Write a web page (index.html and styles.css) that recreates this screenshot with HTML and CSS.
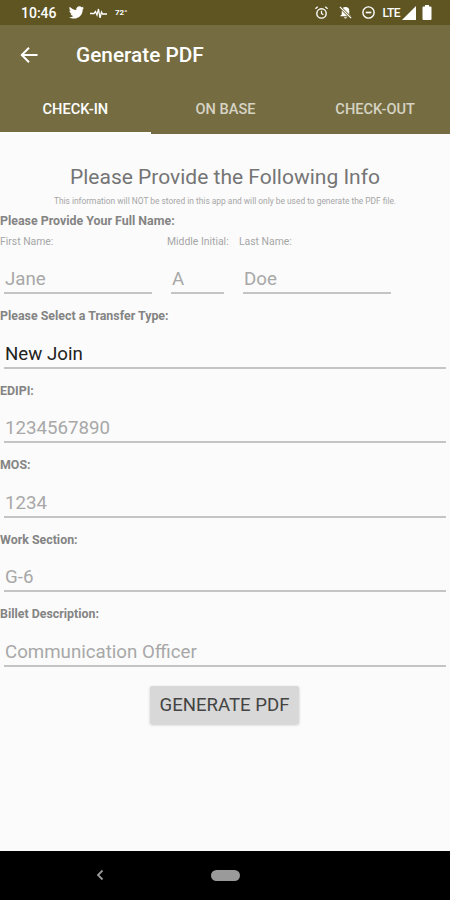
FILE: index.html
```html
<!DOCTYPE html>
<html lang="en">
<head>
    <meta charset="UTF-8">
    <meta name="viewport" content="width=device-width, initial-scale=1.0">
    <title>Generate PDF</title>
<link rel="stylesheet" href="styles.css">
</head>

<body>
<div class="status">
    <span class="time">10:46</span>
    <svg class="ic-bird" width="17" height="15" viewBox="0 0 24 22"><path fill="#fff" d="M23 3.900c-.8.400-1.700.600-2.600.700.900-.6 1.600-1.400 2-2.500-.9.500-1.800.900-2.900 1.100C18.700 2.300 17.500 1.800 16.200 1.800c-2.500 0-4.600 2-4.600 4.600 0 .400 0 .700.100 1C7.900 7.200 4.500 5.400 2.200 2.600c-.4.700-.6 1.500-.6 2.300 0 1.600.800 3 2 3.800-.7 0-1.400-.2-2.100-.6v.100c0 2.200 1.600 4.100 3.700 4.500-.7.200-1.400.200-2.100.100.600 1.800 2.300 3.100 4.300 3.200C5.800 17.200 3.300 18 .9 17.800c2.100 1.300 4.500 2.100 7.100 2.100 8.500 0 13.100-7 13.100-13.100v-.6c.8-.6 1.500-1.400 1.900-2.300z"/></svg>
    <svg class="ic-wave" width="18" height="10" viewBox="0 0 18 10"><path fill="none" stroke="#fff" stroke-width="1.300" d="M0 5.500h4l1.500-2 1.500 3.500 1.500-6 1.500 9 1.500-6 1 2h4.500"/></svg>
    <span class="temp">72°</span>
    <span class="status-right">
        <svg width="15" height="15" viewBox="0 0 16 16"><circle cx="8" cy="9" r="5" fill="none" stroke="#fff" stroke-width="1.500"/><path fill="none" stroke="#fff" stroke-width="1.300" d="M8 6v3l2 1.500M1.500 4L4 1.800M14.500 4L12 1.800"/></svg>
        <svg class="ic-mute" width="15" height="15" viewBox="0 0 16 16"><path fill="#fff" d="M8 2a4 4 0 0 0-4 4v4l-1.500 1.500v.5h11v-.5L12 10V6a4 4 0 0 0-4-4zM6.500 13a1.500 1.500 0 0 0 3 0z"/><path stroke="#5e5523" stroke-width="3" d="M2 2l12 12"/><path stroke="#fff" stroke-width="1.300" d="M2 2l12 12"/></svg>
        <svg class="ic-dnd" width="15" height="15" viewBox="0 0 16 16"><circle cx="8" cy="8" r="6" fill="none" stroke="#fff" stroke-width="1.500"/><path stroke="#fff" stroke-width="1.800" d="M5 8h6"/></svg>
        <span class="lte">LTE</span>
        <svg class="ic-signal" width="14" height="14" viewBox="0 0 14 14"><path fill="#fff" d="M14 0v14H0z"/></svg>
        <svg class="ic-batt" width="10" height="15" viewBox="0 0 10 15"><path fill="#fff" d="M3 0h4v1.500h1.500a1 1 0 0 1 1 1V14a1 1 0 0 1-1 1h-7a1 1 0 0 1-1-1V2.500a1 1 0 0 1 1-1H3z"/></svg>
    </span>
</div>

<div class="appbar">
    <svg class="back" width="20" height="20" viewBox="0 0 20 20"><path fill="none" stroke="#fff" stroke-width="2" d="M18.500 10H3M10 2.800L2.800 10l7.200 7.200"/></svg>
    <h1>Generate PDF</h1>
</div>

<div class="tabs">
    <a class="tab active">CHECK-IN</a>
    <a class="tab">ON BASE</a>
    <a class="tab">CHECK-OUT</a>
</div>

<div class="content">
    <h2>Please Provide the Following Info</h2>
    <p class="note">This information will NOT be stored in this app and will only be used to generate the PDF file.</p>

    <div class="label first">Please Provide Your Full Name:</div>
    <div class="name-row">
        <div class="col col-first"><span class="sub">First Name:</span><div class="field">Jane</div></div>
        <div class="col col-mid"><span class="sub">Middle Initial:</span><div class="field">A</div></div>
        <div class="col col-last"><span class="sub">Last Name:</span><div class="field">Doe</div></div>
    </div>

    <div class="label">Please Select a Transfer Type:</div>
    <div class="field wide dark">New Join</div>
    <div class="label">EDIPI:</div>
    <div class="field wide">1234567890</div>
    <div class="label">MOS:</div>
    <div class="field wide">1234</div>
    <div class="label">Work Section:</div>
    <div class="field wide">G-6</div>
    <div class="label">Billet Description:</div>
    <div class="field wide">Communication Officer</div>

    <div class="btn-row"><button>GENERATE PDF</button></div>
</div>

<div class="navbar">
    <svg width="10" height="12" viewBox="0 0 10 12"><path fill="none" stroke="#9a9a9a" stroke-width="1.800" d="M7.500 1.500L3 6l4.500 4.500"/></svg>
    <span class="pill"></span>
</div>
</body>
</html>
```

FILE: styles.css
```css
*{
	padding:0;
	margin:0;
	box-sizing:border-box;
	}
html,body{
	height:900px;
	overflow:hidden;
	}
body{
	width:450px;
	display:flex;
	flex-direction:column;
	background:#fbfbfb;
	font-family:Roboto,"Liberation Sans",sans-serif;
	}

.status{
	height:25px;
	background:#5e5523;
	color:#fff;
	display:flex;
	align-items:center;
	padding-left:21px;
	}
.time{
	font-size:14px;
	font-weight:500;
	width:47px;
	}
.ic-wave{
	margin-left:5px;
	}
.temp{
	font-size:8px;
	font-weight:700;
	margin-left:7px;
	}
.status-right{
	margin-left:auto;
	padding-right:18px;
	display:flex;
	align-items:center;
	}
.ic-mute{
	margin-left:9px;
	}
.ic-dnd{
	margin-left:8px;
	}
.lte{
	font-size:12px;
	font-weight:500;
	margin-left:6px;
	letter-spacing:-.5px;
	}
.ic-signal{
	margin-left:2px;
	}
.ic-batt{
	margin-left:6px;
	}

.appbar{
	height:60px;
	background:#756d41;
	display:flex;
	align-items:center;
	padding-left:19px;
	}
.appbar h1{
	font-size:20.8px;
	font-weight:500;
	color:#fff;
	margin-left:37px;
	}

.tabs{
	height:49px;
	background:#756d41;
	display:flex;
	}
.tab{
	width:150px;
	text-align:center;
	line-height:48px;
	font-size:14.6px;
	font-weight:500;
	color:#d6d3c4;
	}
.tab.active{
	width:151px;
	color:#fff;
	border-bottom:2px solid #fff;
	}

.content{
	flex:1;
	}
h2{
	font-size:21px;
	font-weight:400;
	color:#757575;
	text-align:center;
	margin-top:30px;
	line-height:26px;
	}
.note{
	font-size:8.4px;
	color:#a6a6a6;
	text-align:center;
	line-height:12px;
	margin-top:5px;
	}
.label{
	font-size:12.4px;
	font-weight:700;
	color:#848484;
	line-height:14px;
	margin-top:15px;
	}
.label.first{
	margin-top:7px;
	}
.name-row{
	display:flex;
	padding-left:4px;
	}
.col-first{
	width:167px;
	}
.col-mid{
	width:72px;
	}
.col-last{
	width:148px;
	}
.sub{
	display:block;
	font-size:10.4px;
	color:#a6a6a6;
	line-height:12px;
	margin:8px 0 0 -4px;
	white-space:nowrap;
	}
.field{
	font-size:18.7px;
	color:#a8a8a8;
	line-height:24px;
	height:45.5px;
	padding:18.5px 0 0 1px;
	border-bottom:2px solid #c4c4c4;
	}
.name-row .field{
	height:46px;
	padding-top:19px;
	}
.col-first .field{
	width:148px;
	}
.col-mid .field{
	width:53px;
	}
.wide{
	margin:0 4px;
	}
.dark{
	color:#222;
	}
.btn-row{
	display:flex;
	justify-content:center;
	margin-top:19.5px;
	padding-right:1px;
	}
button{
	width:149px;
	height:38px;
	border:none;
	border-radius:2px;
	background:#d8d8d8;
	color:#444;
	font-family:inherit;
	font-size:18.6px;
	white-space:nowrap;
	box-shadow:0 1px 3px rgba(0,0,0,.2);
	}

.navbar{
	height:49.5px;
	background:#000;
	display:flex;
	align-items:center;
	padding-left:95px;
	}
.pill{
	width:29px;
	height:11px;
	border-radius:6px;
	background:#9a9a9a;
	margin-left:106px;
	}
```
